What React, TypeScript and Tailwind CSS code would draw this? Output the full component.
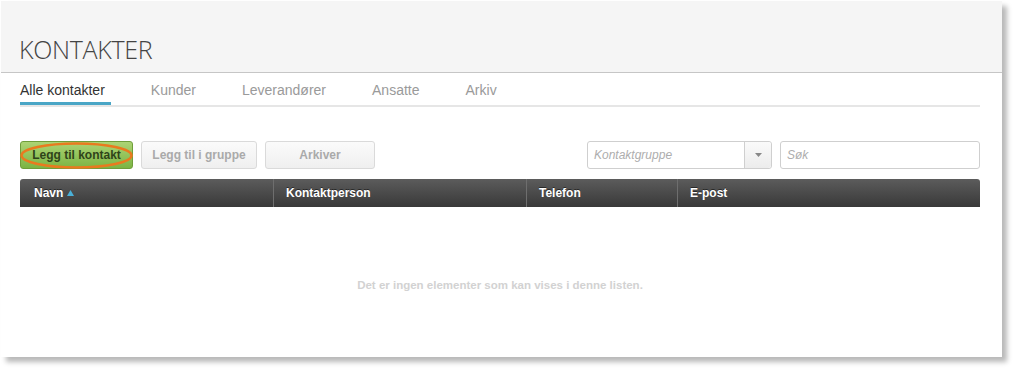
const TABS = ["Alle kontakter", "Kunder", "Leverandører", "Ansatte", "Arkiv"];

const COLS = [
  { label: "Navn", w: "w-[253px]", sort: true },
  { label: "Kontaktperson", w: "w-[253px]" },
  { label: "Telefon", w: "w-[151px]" },
  { label: "E-post", w: "flex-1" },
];

export default function App() {
  return (
    <div className="w-[1015px] h-[370px] bg-white font-['Liberation_Sans',Arial,sans-serif]">
      <div className="ml-px mt-px w-[1001px] h-[356px] bg-white shadow-[5px_5px_5px_rgba(0,0,0,0.28)]">
        {/* Header */}
        <div className="h-[72px] bg-[#f5f5f5] border-b border-[#c6c6c6] px-[18px] pt-[33px]">
          <h1 className="font-['Open_Sans',sans-serif] font-light text-[25px] leading-[30px] text-[#444] tracking-[-0.3px]">
            KONTAKTER
          </h1>
        </div>

        <div className="pl-[19px] pr-[22px]">
          {/* Tabs */}
          <div className="border-b-2 border-[#e6e6e6]">
            <div className="flex gap-[40px] pt-[9px]">
              {TABS.map((t, i) => (
                <div key={t} className="flex flex-col">
                  <span
                    className={`text-[14px] leading-[16px] pr-[6px] ${
                      i === 0 ? "text-[#333]" : "text-[#9a9a9a]"
                    }`}
                  >
                    {t}
                  </span>
                  <span
                    className={`mt-[4px] h-[3px] ${i === 0 ? "bg-[#4aa6c6]" : "bg-transparent"}`}
                  />
                </div>
              ))}
            </div>
          </div>

          {/* Toolbar */}
          <div className="flex items-center mt-[34px] h-[28px]">
            <div className="relative">
              <button className="w-[113px] h-[28px] rounded-[3px] border border-[#6f9e3a] bg-gradient-to-b from-[#acd474] to-[#7cb443] text-[12px] font-bold text-[#2f4319]">
                Legg til kontakt
              </button>
              <svg
                className="absolute left-0 top-0 pointer-events-none"
                width="113"
                height="28"
                viewBox="0 0 113 28"
              >
                <ellipse cx="56.5" cy="14.5" rx="55" ry="12" fill="none" stroke="#e97a1f" strokeWidth="2.5" />
              </svg>
            </div>
            <button className="ml-[8px] w-[116px] h-[28px] rounded-[3px] border border-[#dadada] bg-gradient-to-b from-[#fbfbfb] to-[#efefef] text-[12px] font-bold text-[#aaaaaa]">
              Legg til i gruppe
            </button>
            <button className="ml-[8px] w-[110px] h-[28px] rounded-[3px] border border-[#dadada] bg-gradient-to-b from-[#fbfbfb] to-[#efefef] text-[12px] font-bold text-[#aaaaaa]">
              Arkiver
            </button>

            <div className="ml-auto flex h-[28px] w-[185px] rounded-[3px] border border-[#cfcfcf] bg-white">
              <span className="flex-1 pl-[6px] flex items-center text-[12px] italic text-[#adadad]">
                Kontaktgruppe
              </span>
              <span className="w-[27px] flex items-center justify-center border-l border-[#cfcfcf] rounded-r-[3px] bg-gradient-to-b from-[#fafafa] to-[#ececec]">
                <svg width="7" height="4" viewBox="0 0 7 4">
                  <path d="M0 0h7L3.5 4z" fill="#888" />
                </svg>
              </span>
            </div>
            <div className="ml-[8px] h-[28px] w-[200px] rounded-[3px] border border-[#cfcfcf] bg-white flex items-center pl-[6px] text-[12px] italic text-[#adadad]">
              Søk
            </div>
          </div>

          {/* Table */}
          <div className="mt-[10px] flex h-[28px] rounded-t-[3px] bg-gradient-to-b from-[#5c5c5c] to-[#393939] overflow-hidden">
            {COLS.map((c, i) => (
              <div
                key={c.label}
                className={`${c.w} flex items-center ${i === 0 ? "pl-[14px]" : "pl-[12px] border-l border-[#6e6e6e]"} ${
                  i < COLS.length - 1 ? "shadow-[1px_0_0_#2e2e2e]" : ""
                }`}
              >
                <span className="text-[12px] font-bold text-white [text-shadow:0_-1px_0_rgba(0,0,0,0.5)]">
                  {c.label}
                </span>
                {c.sort && (
                  <svg className="ml-[4px]" width="7" height="6" viewBox="0 0 7 6">
                    <path d="M3.5 0L7 6H0z" fill="#4ab0d8" />
                  </svg>
                )}
              </div>
            ))}
          </div>

          <div className="pt-[70px] text-center text-[11.5px] font-bold text-[#d2d2d2]">
            Det er ingen elementer som kan vises i denne listen.
          </div>
        </div>
      </div>
    </div>
  );
}
